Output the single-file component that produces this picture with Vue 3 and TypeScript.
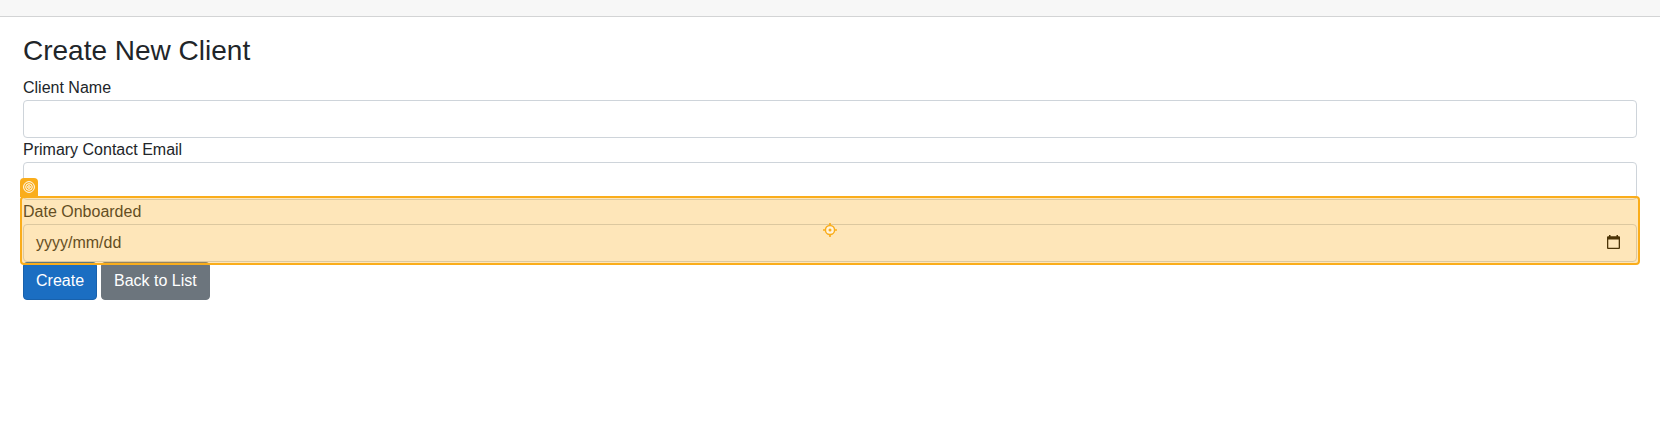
<script setup lang="ts">
interface Field {
  id: string
  label: string
  placeholder?: string
  date?: boolean
}

const fields: Field[] = [
  { id: 'name', label: 'Client Name' },
  { id: 'email', label: 'Primary Contact Email' },
  { id: 'onboarded', label: 'Date Onboarded', placeholder: 'yyyy/mm/dd', date: true },
]
</script>

<template>
  <div class="page">
    <header class="topbar"></header>
    <main class="content">
      <h3 class="title">Create New Client</h3>
      <form class="form" @submit.prevent>
        <div v-for="field in fields" :key="field.id" class="group">
          <label class="label">{{ field.label }}</label>
          <div class="control">
            <span>{{ field.placeholder }}</span>
            <svg v-if="field.date" class="calendar" width="13" height="15" viewBox="0 0 13 15">
              <path fill="#000" fill-rule="evenodd" d="M2 0h1.5v1.3h6V0H11v1.3h1q1 0 1 1V13q0 1-1 1H1q-1 0-1-1V2.300q0-1 1-1h1zM1.300 4.600v8.100h10.400V4.600z" />
            </svg>
          </div>
          <div v-if="field.date" class="highlight">
            <span class="badge">
              <svg width="12" height="12" viewBox="0 0 12 12" fill="none" stroke="#fff">
                <circle cx="6" cy="6" r="5.400" />
                <circle cx="6" cy="6" r="3.300" />
                <circle cx="6" cy="6" r="1.300" />
              </svg>
            </span>
            <svg class="target" width="14" height="14" viewBox="0 0 14 14">
              <circle cx="7" cy="7" r="4.600" fill="#fff3dc" stroke="#faad1b" stroke-width="1.500" />
              <circle cx="7" cy="7" r="1.500" fill="#faad1b" />
              <path stroke="#faad1b" stroke-width="1.700" d="M7 0v2.500M7 11.500V14M0 7h2.500M11.500 7H14" />
            </svg>
          </div>
        </div>
        <div class="actions">
          <button class="btn primary" type="submit">Create</button>
          <button class="btn secondary" type="button">Back to List</button>
        </div>
      </form>
    </main>
  </div>
</template>

<style>
body {
  margin: 0;
  background: #fff;
}
</style>

<style scoped>
.page {
  height: 442px;
  overflow: hidden;
  color: #212529;
  font: 16px/24px "Liberation Sans", Arial, sans-serif;
}
.topbar {
  height: 16px;
  background: #f7f7f7;
  border-bottom: 1px solid #d3d4d5;
}
.content {
  padding: 17.400px 23px 0;
}
.title {
  margin: 0 0 8px;
  font-size: 28px;
  line-height: 33.600px;
  font-weight: 400;
}
.group {
  position: relative;
}
.label {
  display: block;
  height: 24px;
}
.control {
  box-sizing: border-box;
  height: 38px;
  display: flex;
  align-items: center;
  justify-content: space-between;
  padding: 0 16px 0 12px;
  border: 1px solid #ced4da;
  border-radius: 4px;
  background: #fff;
  color: #212529;
}
.highlight {
  position: absolute;
  z-index: 1;
  box-sizing: border-box;
  inset: -4px -3px -3px;
  display: flex;
  align-items: center;
  justify-content: center;
  border: 2px solid #faad1b;
  border-radius: 4px;
  background: rgba(251, 173, 23, 0.3);
}
.badge {
  position: absolute;
  left: -2px;
  top: -20px;
  width: 18px;
  height: 19px;
  display: flex;
  align-items: center;
  justify-content: center;
  border-radius: 4px 4px 0 0;
  background: #faad1b;
}
.actions {
  display: flex;
  gap: 4px;
}
.btn {
  box-sizing: border-box;
  height: 38px;
  padding: 0 12px;
  border: 1px solid #1861ac;
  border-radius: 4px;
  color: #fff;
  font: inherit;
}
.primary {
  background: #1b6ec2;
}
.secondary {
  background: #6c757d;
  border-color: #6c757d;
}
</style>
